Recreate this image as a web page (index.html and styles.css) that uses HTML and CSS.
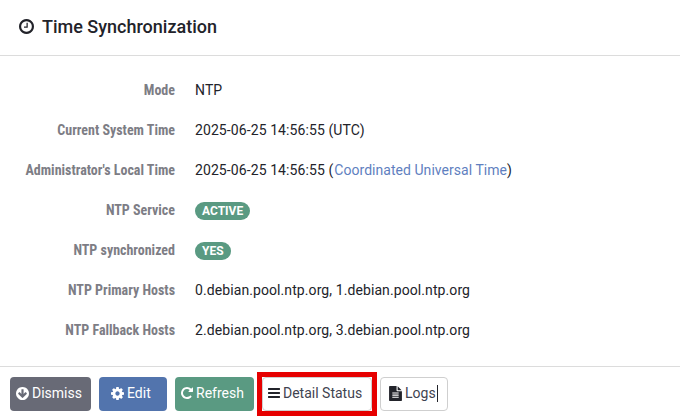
FILE: index.html
```html
<!DOCTYPE html>
<html lang="en">
<head>
<meta charset="utf-8">
<title>Time Synchronization</title>
<link rel="stylesheet" href="styles.css">
</head>
<body>
<div class="panel">
  <header class="head">
    <svg class="ico ico-title" viewBox="128 128 1536 1536"><path d="M1024 544v448q0 14-9 23t-23 9h-320q-14 0-23-9t-9-23v-64q0-14 9-23t23-9h224v-352q0-14 9-23t23-9h64q14 0 23 9t9 23zm416 352q0-148-73-273t-198-198-273-73-273 73-198 198-73 273 73 273 198 198 273 73 273-73 198-198 73-273zm224 0q0 209-103 385.500t-279.500 279.500-385.500 103-385.500-103-279.500-279.500-103-385.500 103-385.500 279.500-279.500 385.500-103 385.500 103 279.500 279.500 103 385.500z"/></svg>
    <h1 class="title">Time Synchronization</h1>
  </header>
  <div class="details">
    <div class="row"><div class="label">Mode</div><div class="value">NTP</div></div>
    <div class="row"><div class="label">Current System Time</div><div class="value">2025-06-25 14:56:55 (UTC)</div></div>
    <div class="row"><div class="label">Administrator's Local Time</div><div class="value">2025-06-25 14:56:55 (<a class="link" href="#">Coordinated Universal Time</a>)</div></div>
    <div class="row"><div class="label">NTP Service</div><div class="value"><span class="pill">ACTIVE</span></div></div>
    <div class="row"><div class="label">NTP synchronized</div><div class="value"><span class="pill">YES</span></div></div>
    <div class="row"><div class="label">NTP Primary Hosts</div><div class="value">0.debian.pool.ntp.org, 1.debian.pool.ntp.org</div></div>
    <div class="row"><div class="label">NTP Fallback Hosts</div><div class="value">2.debian.pool.ntp.org, 3.debian.pool.ntp.org</div></div>
  </div>
  <footer class="actions">
    <button class="btn btn-grey"><svg class="ico" viewBox="128 128 1536 1536"><path d="M1412 897q0-27-18-45l-91-91q-18-18-45-18t-45 18l-189 189v-502q0-26-19-45t-45-19h-128q-26 0-45 19t-19 45v502l-189-189q-19-19-45-19t-45 19l-91 91q-18 18-18 45t18 45l362 362 91 91q18 18 45 18t45-18l91-91 362-362q18-18 18-45zm252-1q0 209-103 385.500t-279.500 279.500-385.500 103-385.500-103-279.500-279.500-103-385.500 103-385.500 279.500-279.500 385.500-103 385.500 103 279.500 279.500 103 385.500z"/></svg>Dismiss</button>
    <button class="btn btn-blue"><svg class="ico" viewBox="128 128 1536 1536"><path d="M1152 896q0-106-75-181t-181-75-181 75-75 181 75 181 181 75 181-75 75-181zm512-109v222q0 12-8 23t-20 13l-185 28q-19 54-39 91 35 50 107 138 10 12 10 25t-9 23q-27 37-99 108t-94 71q-12 0-26-9l-138-108q-44 23-91 38-16 136-29 186-7 28-36 28h-222q-14 0-24.500-8.500t-11.500-21.500l-28-184q-49-16-90-37l-141 107q-10 9-25 9-14 0-25-11-126-114-165-168-7-10-7-23 0-12 8-23 15-21 51-66.500t54-70.500q-27-50-41-99l-183-27q-13-2-21-12.500t-8-23.500v-222q0-12 8-23t19-13l186-28q14-46 39-92-40-57-107-138-10-12-10-24 0-10 9-23 26-36 98.500-107.500t94.500-71.500q13 0 26 10l138 107q44-23 91-38 16-136 29-186 7-28 36-28h222q14 0 24.500 8.500t11.500 21.500l28 184q49 16 90 37l142-107q9-9 24-9 13 0 25 10 129 119 165 170 7 8 7 22 0 12-8 23-15 21-51 66.500t-54 70.500q26 50 41 98l183 28q13 2 21 12.500t8 23.500z"/></svg>Edit</button>
    <button class="btn btn-green"><svg class="ico ico-narrow" viewBox="128 128 1536 1536"><path d="M1664 256v448q0 26-19 45t-45 19h-448q-42 0-59-40-17-39 14-69l138-138q-148-137-349-137-104 0-198.500 40.500t-163.500 109.500-109.500 163.500-40.500 198.500 40.500 198.500 109.500 163.500 163.500 109.500 198.500 40.500q119 0 225-52t179-147q7-10 23-12 15 0 25 9l137 138q9 8 9.500 20.500t-7.500 22.500q-109 132-264 204.500t-327 72.500q-156 0-298-61t-245-164-164-245-61-298 61-298 164-245 245-164 298-61q147 0 284.500 55.500t244.500 156.500l130-129q29-31 70-14 39 17 39 59z"/></svg>Refresh</button>
    <button class="btn btn-white btn-marked"><svg class="ico ico-narrow" viewBox="128 128 1536 1536"><path d="M1664 1344v128q0 26-19 45t-45 19h-1408q-26 0-45-19t-19-45v-128q0-26 19-45t45-19h1408q26 0 45 19t19 45zm0-512v128q0 26-19 45t-45 19h-1408q-26 0-45-19t-19-45v-128q0-26 19-45t45-19h1408q26 0 45 19t19 45zm0-512v128q0 26-19 45t-45 19h-1408q-26 0-45-19t-19-45v-128q0-26 19-45t45-19h1408q26 0 45 19t19 45z"/></svg>Detail Status</button>
    <button class="btn btn-white btn-logs"><svg class="ico ico-file" viewBox="128 0 1536 1792"><path d="M1596 476q14 14 28 36h-472v-472q22 14 36 28zm-476 164h544v1056q0 40-28 68t-68 28h-1344q-40 0-68-28t-28-68v-1600q0-40 28-68t68-28h800v544q0 40 28 68t68 28zm160 736v-64q0-14-9-23t-23-9h-704q-14 0-23 9t-9 23v64q0 14 9 23t23 9h704q14 0 23-9t9-23zm0-256v-64q0-14-9-23t-23-9h-704q-14 0-23 9t-9 23v64q0 14 9 23t23 9h704q14 0 23-9t9-23zm0-256v-64q0-14-9-23t-23-9h-704q-14 0-23 9t-9 23v64q0 14 9 23t23 9h704q14 0 23-9t9-23z"/></svg>Logs<span class="caret"></span></button>
  </footer>
</div>
</body>
</html>
```
FILE: styles.css
```css
* { box-sizing: border-box; }
html, body { margin: 0; padding: 0; background: #fff; }
body { font-family: Roboto, "Liberation Sans", sans-serif; font-size: 14px; color: #22232a; }
.panel { width: 680px; height: 420px; display: flex; flex-direction: column; }
.head { height: 56px; display: flex; align-items: center; gap: 8px; padding: 0 18px 2px 19px; border-bottom: 1px solid #dcdcdc; }
.title { margin: 0; font-size: 18px; font-weight: 500; line-height: 24px; color: #22232a; }
.ico { width: 13px; height: 13px; fill: currentColor; flex: none; }
.ico-title { width: 15px; height: 15px; }
.ico-narrow { width: 12px; height: 12px; }
.ico-file { height: 15px; }
.details { height: 310px; padding: 14px 0 16px; }
.row { height: 40px; display: grid; grid-template-columns: 175px 1fr; column-gap: 20px; align-items: center; }
.label { text-align: right; font-weight: 700; font-stretch: 87%; color: #7d7d85; white-space: nowrap; }
.value { white-space: nowrap; letter-spacing: 0.09px; }
.link { color: #5f7fc0; text-decoration: none; letter-spacing: 0.04px; margin-left: 1px; }
.pill { display: block; width: fit-content; margin-top: 2px; background: #5a9a82; color: #fff; font-size: 12px; font-weight: 700; line-height: 18px; letter-spacing: 0; padding: 0 7px; border-radius: 9px; }
.actions { border-top: 1px solid #dcdcdc; padding: 10px 10px 0; display: flex; gap: 8px; }
.btn { position: relative; height: 34px; display: inline-flex; align-items: center; justify-content: flex-start; gap: 3px; padding: 0 0 2px 5px; border: 1px solid transparent; border-radius: 4px; font: inherit; color: #fff; white-space: nowrap; }
.btn-grey { background: #686a76; width: 81px; }
.btn-blue { background: #5274ad; width: 68px; padding-left: 11px; }
.btn-green { background: #5a9a82; width: 79px; }
.btn-white { background: #fff; border-color: #cfcfcf; color: #3f4350; }
.btn-white .ico { color: #22232a; }
.btn-marked { width: 110px; }
.btn-marked::after { content: ""; position: absolute; inset: -6px; border: 5px solid #e60000; pointer-events: none; }
.btn-logs { width: 68px; padding-left: 8px; }
.caret { display: inline-block; width: 1px; height: 17px; margin-left: -2px; background: #22232a; }
```
